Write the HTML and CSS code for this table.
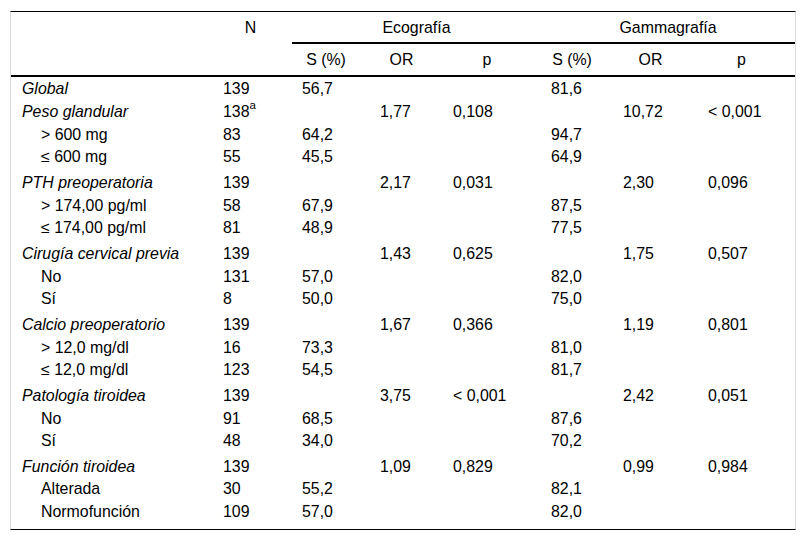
FILE: index.html
```html
<!DOCTYPE html>
<html lang="es">
<head>
<meta charset="utf-8">
<title>Tabla</title>
<link rel="stylesheet" href="styles.css">
</head>
<body>
<table class="tbl">
  <colgroup>
    <col class="c-label"><col class="c-n"><col class="c-es"><col class="c-eor"><col class="c-ep"><col class="c-gs"><col class="c-gor"><col class="c-gp">
  </colgroup>
  <thead>
    <tr class="h1">
      <th></th>
      <th class="hc">N</th>
      <th colspan="3" class="grp-h">Ecografía</th>
      <th colspan="3" class="grp-h">Gammagrafía</th>
    </tr>
    <tr class="h2">
      <th></th><th></th>
      <th class="hc">S (%)</th><th class="hc">OR</th><th class="hc">p</th>
      <th class="hc">S (%)</th><th class="hc">OR</th><th class="hc">p</th>
    </tr>
  </thead>
  <tbody>
    <tr class="first"><td class="lab">Global</td><td>139</td><td>56,7</td><td></td><td></td><td>81,6</td><td></td><td></td></tr>
    <tr><td class="lab">Peso glandular</td><td>138<sup>a</sup></td><td></td><td>1,77</td><td>0,108</td><td></td><td>10,72</td><td>&lt; 0,001</td></tr>
    <tr><td class="sub">&gt; 600 mg</td><td>83</td><td>64,2</td><td></td><td></td><td>94,7</td><td></td><td></td></tr>
    <tr><td class="sub">≤ 600 mg</td><td>55</td><td>45,5</td><td></td><td></td><td>64,9</td><td></td><td></td></tr>
    <tr class="grp"><td class="lab">PTH preoperatoria</td><td>139</td><td></td><td>2,17</td><td>0,031</td><td></td><td>2,30</td><td>0,096</td></tr>
    <tr><td class="sub">&gt; 174,00 pg/ml</td><td>58</td><td>67,9</td><td></td><td></td><td>87,5</td><td></td><td></td></tr>
    <tr><td class="sub">≤ 174,00 pg/ml</td><td>81</td><td>48,9</td><td></td><td></td><td>77,5</td><td></td><td></td></tr>
    <tr class="grp"><td class="lab">Cirugía cervical previa</td><td>139</td><td></td><td>1,43</td><td>0,625</td><td></td><td>1,75</td><td>0,507</td></tr>
    <tr><td class="sub">No</td><td>131</td><td>57,0</td><td></td><td></td><td>82,0</td><td></td><td></td></tr>
    <tr><td class="sub">Sí</td><td>8</td><td>50,0</td><td></td><td></td><td>75,0</td><td></td><td></td></tr>
    <tr class="grp"><td class="lab">Calcio preoperatorio</td><td>139</td><td></td><td>1,67</td><td>0,366</td><td></td><td>1,19</td><td>0,801</td></tr>
    <tr><td class="sub">&gt; 12,0 mg/dl</td><td>16</td><td>73,3</td><td></td><td></td><td>81,0</td><td></td><td></td></tr>
    <tr><td class="sub">≤ 12,0 mg/dl</td><td>123</td><td>54,5</td><td></td><td></td><td>81,7</td><td></td><td></td></tr>
    <tr class="grp"><td class="lab">Patología tiroidea</td><td>139</td><td></td><td>3,75</td><td>&lt; 0,001</td><td></td><td>2,42</td><td>0,051</td></tr>
    <tr><td class="sub">No</td><td>91</td><td>68,5</td><td></td><td></td><td>87,6</td><td></td><td></td></tr>
    <tr><td class="sub">Sí</td><td>48</td><td>34,0</td><td></td><td></td><td>70,2</td><td></td><td></td></tr>
    <tr class="grp"><td class="lab">Función tiroidea</td><td>139</td><td></td><td>1,09</td><td>0,829</td><td></td><td>0,99</td><td>0,984</td></tr>
    <tr><td class="sub">Alterada</td><td>30</td><td>55,2</td><td></td><td></td><td>82,1</td><td></td><td></td></tr>
    <tr class="last"><td class="sub">Normofunción</td><td>109</td><td>57,0</td><td></td><td></td><td>82,0</td><td></td><td></td></tr>
  </tbody>
</table>
</body>
</html>
```

FILE: styles.css
```css
html, body {
  margin: 0;
  padding: 0;
  background: #fff;
}
body {
  padding: 11px 0 0 10px;
  font-family: "Liberation Sans", Arial, sans-serif;
  font-size: 15.9px;
  color: #000;
}
.tbl {
  width: 786px;
  table-layout: fixed;
  border-collapse: separate;
  border-spacing: 0;
  border-top: 1px solid #000;
  border-bottom: 1px solid #000;
  border-left: 1px solid #dcdcdc;
  border-right: 1px solid #dcdcdc;
}
.c-label { width: 202px; }
.c-n { width: 79px; }
.c-es { width: 78px; }
.c-eor { width: 73px; }
.c-ep { width: 98px; }
.c-gs { width: 72px; }
.c-gor { width: 85px; }
.c-gp { width: 97px; }

th, td {
  line-height: 18.8px;
  font-weight: normal;
  text-align: left;
  white-space: nowrap;
  vertical-align: top;
}
th {
  padding: 0;
}
.h1 th {
  padding-top: 6.5px;
  padding-bottom: 4.7px;
}
.h1 th.grp-h {
  text-align: center;
  border-bottom: 2px solid #000;
}
.h1 th.hc {
  text-align: center;
  padding-right: 4px;
}
.h2 th {
  padding-top: 7px;
  padding-bottom: 5.2px;
  border-bottom: 2px solid #000;
}
.h2 th.hc {
  text-align: center;
  padding-right: 10px;
}
td {
  padding: 2px 0 2px 10px;
}
td.lab {
  font-style: italic;
  padding-left: 11px;
}
td.sub {
  padding-left: 30px;
}
tr.first td {
  padding-top: 3px;
}
tr.grp td {
  padding-top: 4.6px;
}
tr.last td {
  padding-bottom: 7px;
}
sup {
  font-size: 11.5px;
  line-height: 0;
  position: relative;
  top: -1px;
  vertical-align: super;
}
```
